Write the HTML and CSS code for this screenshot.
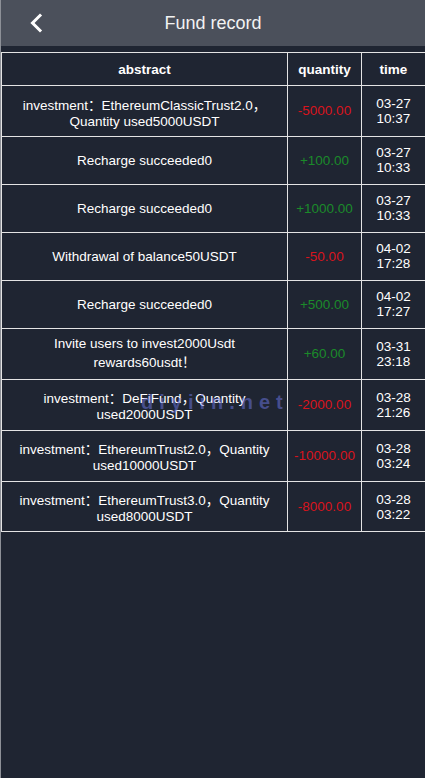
FILE: index.html
```html
<!DOCTYPE html>
<html lang="en">
<head>
<meta charset="utf-8">
<title>Fund record</title>
<link rel="stylesheet" href="styles.css">
</head>
<body>
<div class="page">
  <header class="topbar">
    <span class="back">
      <svg width="14" height="20" viewBox="0 0 14 20"><path d="M11 2.5 L3.5 10 L11 17.5" fill="none" stroke="#ffffff" stroke-width="3" stroke-linecap="square"/></svg>
    </span>
    <h1 class="title">Fund record</h1>
  </header>
  <main class="content">
    <table class="records">
      <colgroup>
        <col class="c-abs">
        <col class="c-qty">
        <col class="c-time">
      </colgroup>
      <thead>
        <tr><th>abstract</th><th>quantity</th><th>time</th></tr>
      </thead>
      <tbody>
        <tr><td class="wide">investment：EthereumClassicTrust2.0，Quantity used5000USDT</td><td class="neg">-5000.00</td><td>03-27 10:37</td></tr>
        <tr><td>Recharge succeeded0</td><td class="pos">+100.00</td><td>03-27 10:33</td></tr>
        <tr><td>Recharge succeeded0</td><td class="pos">+1000.00</td><td>03-27 10:33</td></tr>
        <tr><td>Withdrawal of balance50USDT</td><td class="neg">-50.00</td><td>04-02 17:28</td></tr>
        <tr><td>Recharge succeeded0</td><td class="pos">+500.00</td><td>04-02 17:27</td></tr>
        <tr><td class="wide">Invite users to invest2000Usdt rewards60usdt！</td><td class="pos">+60.00</td><td>03-31 23:18</td></tr>
        <tr><td class="wide">investment：DeFiFund，Quantity used2000USDT</td><td class="neg">-2000.00</td><td>03-28 21:26</td></tr>
        <tr><td class="wide">investment：EthereumTrust2.0，Quantity used10000USDT</td><td class="neg">-10000.00</td><td>03-28 03:24</td></tr>
        <tr><td class="wide">investment：EthereumTrust3.0，Quantity used8000USDT</td><td class="neg">-8000.00</td><td>03-28 03:22</td></tr>
      </tbody>
    </table>
    <div class="watermark">diyiin.net</div>
  </main>
</div>
</body>
</html>
```
FILE: styles.css
```css
html, body {
  margin: 0;
  padding: 0;
  background: #1f2532;
}
body {
  font-family: "Liberation Sans", Arial, "Noto Sans CJK SC", sans-serif;
  color: #ffffff;
}
.page {
  min-height: 778px;
  border-left: 1px solid #8d9097;
  box-sizing: border-box;
  background: #1f2532;
}
.topbar {
  height: 46px;
  background: #4b505b;
  display: flex;
  align-items: center;
  justify-content: center;
  position: relative;
}
.back {
  position: absolute;
  left: 28px;
  top: 13px;
  display: flex;
}
.title {
  margin: 0;
  font-size: 18px;
  font-weight: normal;
  color: #f2f2f2;
}
.content {
  padding-top: 6px;
  position: relative;
}
.records {
  width: 424px;
  border-collapse: collapse;
  table-layout: fixed;
  font-size: 13.5px;
}
.c-abs { width: 286px; }
.c-qty { width: 74px; }
.c-time { width: 64px; }
.records th,
.records td {
  border: 1px solid #e4e4e4;
  text-align: center;
  vertical-align: middle;
  padding: 8.5px 6px;
}
.records th {
  font-weight: bold;
  color: #ffffff;
}
.records td {
  color: #ffffff;
}
.records td.wide {
  padding-top: 7.5px;
  padding-bottom: 7.4px;
}
.records td.neg { color: #d8141d; }
.records td.pos { color: #1b8a2a; }
.watermark {
  position: absolute;
  left: 140px;
  top: 345px;
  font-size: 20px;
  font-weight: bold;
  letter-spacing: 6px;
  color: rgba(110, 120, 230, 0.5);
  pointer-events: none;
}
```
